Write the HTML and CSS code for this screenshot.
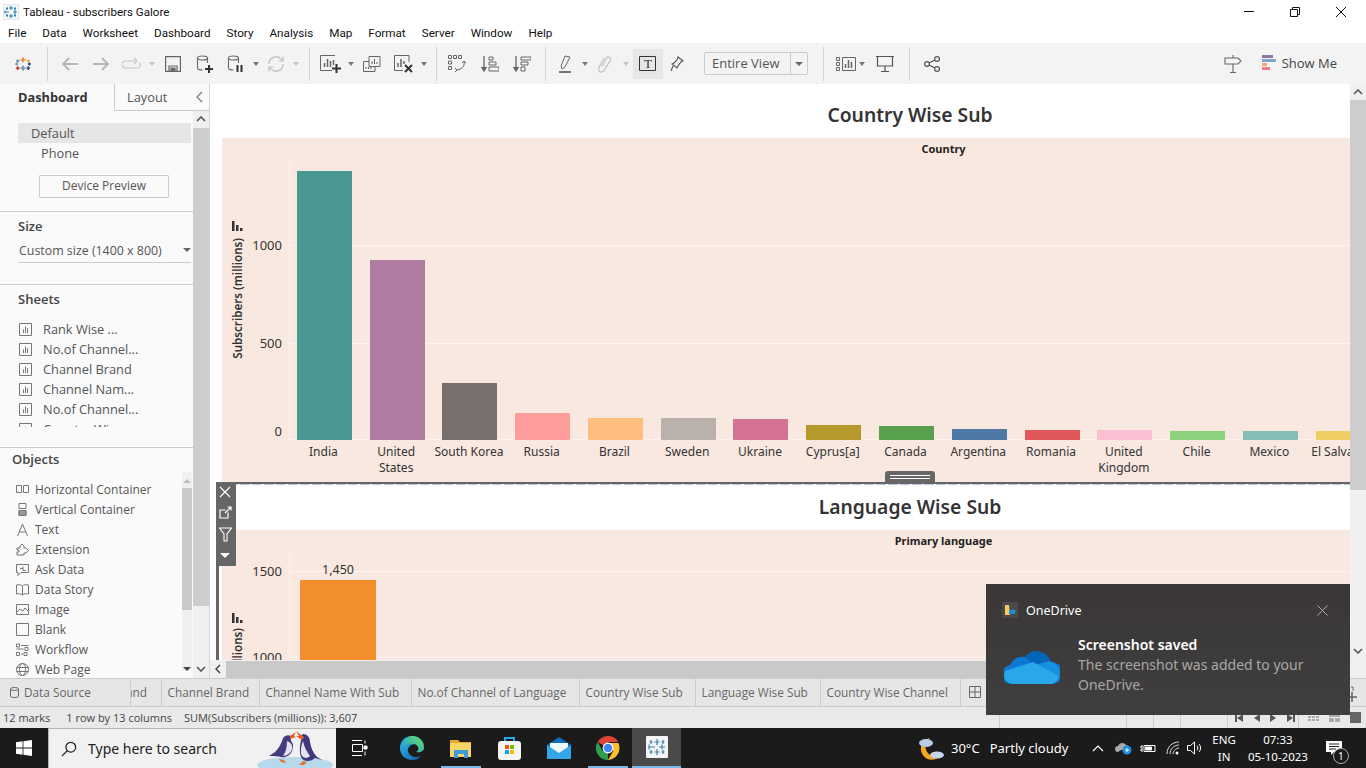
FILE: index.html
```html
<!DOCTYPE html>
<html lang="en">
<head>
    <meta charset="UTF-8">
    <title>Tableau - subscribers Galore</title>
    <link rel="stylesheet" href="styles.css">
</head>
<body>
<div class="app">
    <!-- window title -->
    <div class="titlebar">
        <svg class="title-icon" width="16" height="16" viewBox="0 0 16 16"><rect x="0.5" y="0.5" width="15" height="15" fill="#f4f8fb" stroke="#dfe6ec"/><path d="M8 2v4M6 4h4M8 10v4M6 12h4M2 8h4M2 6.5v3M10 8h4M12 6v4M4 3v3M3 4.500h2M12 3v3M11 4.500h2M4 10v3M3 11.500h2M12 10v3M11 11.500h2" stroke="#2f7fa8" stroke-width="1.100" fill="none"/></svg>
        <span class="title-text">Tableau - subscribers Galore</span>
        <div class="window-buttons">
            <svg width="12" height="12" viewBox="0 0 12 12"><path d="M1 5.500h10" stroke="#111"/></svg>
            <svg width="12" height="12" viewBox="0 0 12 12"><path d="M1.500 3.500h7v7h-7zM3.500 3.500v-2h7v7h-2" stroke="#111" fill="none"/></svg>
            <svg width="12" height="12" viewBox="0 0 12 12"><path d="M1 1l10 10M11 1L1 11" stroke="#111"/></svg>
        </div>
    </div>
    <div class="menubar">
        <span>File</span><span>Data</span><span>Worksheet</span><span>Dashboard</span><span>Story</span><span>Analysis</span><span>Map</span><span>Format</span><span>Server</span><span>Window</span><span>Help</span>
    </div>

    <!-- toolbar -->
    <div class="toolbar">
        <div class="tb-group tb-logo">
            <svg width="18" height="18" viewBox="0 0 24 24" fill="none" stroke-width="1.800"><path d="M12 3v7M8.500 6.500h7" stroke="#e8762b"/><path d="M5 6v4M3 8h4" stroke="#5b879b"/><path d="M19 6v4M17 8h4" stroke="#e8a33d"/><path d="M1.500 12h4M3.500 10v4" stroke="#7099a6"/><path d="M22.500 12h-4M20.500 10v4" stroke="#1f447a"/><path d="M12 14v7M8.500 17.500h7" stroke="#59879b"/><path d="M5 15v5M2.500 17.500h5" stroke="#c72037"/><path d="M19 15v5M16.500 17.500h5" stroke="#1f447a"/></svg>
        </div>
        <div class="sep"></div>
        <div class="tb-group tb-history">
            <svg width="18" height="16" viewBox="0 0 18 16" fill="none" stroke="#b5b5b5" stroke-width="1.800"><path d="M17 8H2M8 2L2 8l6 6"/></svg>
            <svg width="18" height="16" viewBox="0 0 18 16" fill="none" stroke="#b5b5b5" stroke-width="1.800"><path d="M1 8h15M10 2l6 6-6 6"/></svg>
            <svg width="20" height="14" viewBox="0 0 20 14" fill="none" stroke="#c4c4c4" stroke-width="1.200"><path d="M13 4H3.500a3 3 0 000 7h12a3 3 0 002-5M12 1l3 3-3 3"/></svg>
            <i class="dd dd-off"></i>
            <svg width="16" height="16" viewBox="0 0 16 16" fill="none" stroke="#666" stroke-width="1.200"><path d="M.600.600h14.800v14.800H.600z"/><path d="M4 15V10h8v5" /><path d="M6 15v-3h4v3" fill="#666"/></svg>
            <svg width="18" height="18" viewBox="0 0 18 18" fill="none" stroke="#666" stroke-width="1.100"><ellipse cx="6.500" cy="3" rx="5" ry="2"/><path d="M1.500 3v10c0 1 2 2 5 2M11.500 3v5"/><path d="M13 10v8M9 14h8" stroke="#333" stroke-width="2"/></svg>
            <svg width="18" height="18" viewBox="0 0 18 18" fill="none" stroke="#666" stroke-width="1.100"><ellipse cx="6.500" cy="3" rx="5" ry="2"/><path d="M1.500 3v10c0 1 2 2 5 2M11.500 3v5"/><path d="M10.500 10v7M14.500 10v7" stroke="#333" stroke-width="2"/></svg>
            <i class="dd"></i>
            <svg width="18" height="18" viewBox="0 0 18 18" fill="none" stroke="#c4c4c4" stroke-width="1.500"><path d="M2 9a7 7 0 0112-5l2 2M16 9a7 7 0 01-12 5l-2-2"/><path d="M16 1.500V6h-4.500M2 16.500V12h4.500" stroke-width="1.200"/></svg>
            <i class="dd dd-off"></i>
        </div>
        <div class="sep"></div>
        <div class="tb-group tb-sheets">
            <svg width="22" height="18" viewBox="0 0 22 18" fill="none" stroke="#666"><path d="M15 .500H.500v15H12"/><path d="M4.500 12V8M7.500 12V4M10.500 12V6M13.500 10V5" stroke-width="1.500"/><path d="M16.500 9v9M12 13.500h9" stroke="#333" stroke-width="2"/></svg>
            <i class="dd"></i>
            <svg width="18" height="16" viewBox="0 0 18 16" fill="none" stroke="#666"><path d="M6 .500h11v10H6z" fill="#f3f3f3"/><path d="M9 8V5M11.500 8V3M14 8V6"/><path d="M6 5.500H.500v10H12v-5"/><path d="M3 13v-2M5.500 13v-2M8 13v-2"/></svg>
            <svg width="20" height="18" viewBox="0 0 20 18" fill="none" stroke="#666"><path d="M15 7V.500H.500v15H9"/><path d="M4 12V8M7 12V4M10 9V6" stroke-width="1.500"/><path d="M11 10l7 7M18 10l-7 7" stroke="#333" stroke-width="2"/></svg>
            <i class="dd"></i>
        </div>
        <div class="sep"></div>
        <div class="tb-group tb-sort">
            <svg width="18" height="18" viewBox="0 0 18 18" fill="none" stroke="#666"><path d="M.500.500h3v3h-3zM5.500.500h3v3h-3zM10.500.500h3v3h-3zM.500 6h3v3h-3zM.500 11.500h3v3h-3z"/><path d="M16 6c1 4-1 8-7 9M7 13l2 2-2 2M14 8l2-2 2 2"/></svg>
            <svg width="18" height="16" viewBox="0 0 18 16" fill="none" stroke="#666"><path d="M3 0v14M.500 11L3 15l2.500-4" stroke-width="1.300" fill="#666"/><path d="M8 1h4v3H8zM8 6h7v3H8zM8 11h10v4H8z"/></svg>
            <svg width="18" height="16" viewBox="0 0 18 16" fill="none" stroke="#666"><path d="M3 0v14M.500 11L3 15l2.500-4" stroke-width="1.300" fill="#666"/><path d="M8 1h10v3H8zM8 6h7v3H8zM8 11h4v4H8z"/></svg>
        </div>
        <div class="sep"></div>
        <div class="tb-group tb-marks">
            <svg width="14" height="18" viewBox="0 0 14 18" fill="none" stroke="#666"><path d="M6 1l5 1-5 10-3 2 -1-3z"/><path d="M0 17h12" stroke="#555" stroke-width="1.600"/></svg>
            <i class="dd"></i>
            <svg width="14" height="18" viewBox="0 0 14 18" fill="none" stroke="#c4c4c4" stroke-width="1.400"><path d="M4 11.500L8.500 3a2.300 2.300 0 014 2.200L6 15.500a3 3 0 01-5.200-3L6.500 3"/></svg>
            <i class="dd dd-off"></i>
            <span></span>
            <div class="tb-active">
                <svg width="18" height="16" viewBox="0 0 18 16" fill="none" stroke="#333"><path d="M.500.500h16v14H.500z"/></svg>
                <span class="t-glyph">T</span>
            </div>
            <svg width="14" height="16" viewBox="0 0 14 16" fill="none" stroke="#555" stroke-width="1.100"><path d="M8 1l5 4-2 1-3 4-1 2-5-4 2-1 3-3zM3 10l-2 5"/></svg>
        </div>
        <div class="fit-select"><span class="fit-label">Entire View</span><span class="fit-arrow"><i class="dd dd-dark"></i></span></div>
        <div class="sep sep-fit"></div>
        <div class="tb-group tb-present">
            <svg width="20" height="14" viewBox="0 0 20 14" fill="none" stroke="#666"><path d="M.500.500h3v3h-3zM.500 5.500h3v3h-3zM.500 10.500h3v3h-3zM6.500.500h13v13h-13z"/><path d="M9.500 11V7M12.500 11V3M15.500 11V5" stroke-width="1.500"/></svg>
            <i class="dd"></i>
            <svg width="18" height="16" viewBox="0 0 18 16" fill="none" stroke="#555"><path d="M0 .500h18M1.500 1v9h15V1M9 10v5M5 15.500h8" stroke-width="1.200"/></svg>
        </div>
        <div class="sep"></div>
        <div class="tb-share">
            <svg width="16" height="16" viewBox="0 0 16 16" fill="none" stroke="#555" stroke-width="1.200"><circle cx="3" cy="8" r="2.400"/><circle cx="13" cy="3" r="2.400"/><circle cx="13" cy="13" r="2.400"/><path d="M5.200 7l5.600-3M5.200 9l5.600 3"/></svg>
        </div>
        <div class="tb-right">
            <svg width="18" height="18" viewBox="0 0 18 18" fill="none" stroke="#666" stroke-width="1.100"><path d="M9 0v3M1 3h13l3 3-3 3H1zM9 9v8M6 17.500h6"/></svg>
            <div class="show-me">
                <svg width="15" height="16" viewBox="0 0 15 16"><rect width="11" height="3" fill="#8d78a5"/><rect y="4" width="14" height="3" fill="#7fa6cf"/><rect y="8" width="5" height="3" fill="#f2a675"/><rect y="12" width="8" height="3" fill="#f47c86"/></svg>
                <span>Show Me</span>
            </div>
        </div>
    </div>

    <div class="main">
        <!-- left side panel -->
        <aside class="side">
            <div class="side-tabs">
                <div class="side-tab side-tab-active">Dashboard</div>
                <div class="side-tab side-tab-off">Layout<svg class="collapse" width="7" height="12" viewBox="0 0 7 12" fill="none" stroke="#777" stroke-width="1.200"><path d="M6 1L1 6l5 5"/></svg></div>
            </div>
            <div class="side-body">
                <div class="side-content">
                    <section class="device">
                        <div class="device-row device-on">Default</div>
                        <div class="device-row device-phone">Phone</div>
                        <div class="device-btn">Device Preview</div>
                    </section>
                    <section class="size">
                        <h4>Size</h4>
                        <div class="size-select"><span>Custom size (1400 x 800)</span><i class="dd dd-dark"></i></div>
                    </section>
                    <section class="sheets">
                        <h4>Sheets</h4>
                        <div class="sheet-list">
                            <div class="sheet-row"><svg width="13" height="13" viewBox="0 0 13 13"><use href="#sheet-ico"/></svg>Rank Wise ...</div>
                            <div class="sheet-row"><svg width="13" height="13" viewBox="0 0 13 13"><use href="#sheet-ico"/></svg>No.of Channel...</div>
                            <div class="sheet-row"><svg width="13" height="13" viewBox="0 0 13 13"><use href="#sheet-ico"/></svg>Channel Brand</div>
                            <div class="sheet-row"><svg width="13" height="13" viewBox="0 0 13 13"><use href="#sheet-ico"/></svg>Channel Nam...</div>
                            <div class="sheet-row"><svg width="13" height="13" viewBox="0 0 13 13"><use href="#sheet-ico"/></svg>No.of Channel...</div>
                            <div class="sheet-row"><svg width="13" height="13" viewBox="0 0 13 13"><use href="#sheet-ico"/></svg>Country Wise ...</div>
                        </div>
                    </section>
                    <section class="objects">
                        <h4>Objects</h4>
                        <div class="object-wrap">
                            <div class="object-list">
                                <div class="object-row"><svg width="13" height="13" viewBox="0 0 13 13" fill="none" stroke="#777"><path d="M.500 2.500h5v7h-5zM7.500 2.500h5v7h-5z"/></svg>Horizontal Container</div>
                                <div class="object-row"><svg width="13" height="13" viewBox="0 0 13 13" fill="none" stroke="#777"><path d="M3 .500h7v5H3zM3 7.500h7v5H3z"/><path d="M3 7.500h7v5H3z" fill="#999"/></svg>Vertical Container</div>
                                <div class="object-row"><svg width="13" height="13" viewBox="0 0 13 13" fill="none" stroke="#777"><path d="M1.500 13L6.500 1l5 12M3.500 9h6"/></svg>Text</div>
                                <div class="object-row"><svg width="13" height="13" viewBox="0 0 13 13" fill="none" stroke="#777"><path d="M1 5h3V3l2-2 2 2v2h2l2.500 2.500L10 10H8v2H1V9h2V7H1z"/></svg>Extension</div>
                                <div class="object-row"><svg width="13" height="13" viewBox="0 0 13 13" fill="none" stroke="#777"><path d="M.500 1.500h12v8H5l-3 3v-3H.500zM4 5.500h3M7 3.500v4h3"/></svg>Ask Data</div>
                                <div class="object-row"><svg width="13" height="13" viewBox="0 0 13 13" fill="none" stroke="#777"><path d="M6.500 3C5 1.500 2.500 1.500.500 2v9c2-.500 4.500-.500 6 1 1.500-1.500 4-1.500 6-1V2c-2-.500-4.500-.500-6 1zM6.500 3v9"/></svg>Data Story</div>
                                <div class="object-row"><svg width="13" height="13" viewBox="0 0 13 13" fill="none" stroke="#777"><path d="M.500 1.500h12v10H.500zM1 9l3-3 3 2 2-3 3 3"/></svg>Image</div>
                                <div class="object-row"><svg width="13" height="13" viewBox="0 0 13 13" fill="none" stroke="#777"><path d="M.500.500h12v12H.500z"/></svg>Blank</div>
                                <div class="object-row"><svg width="13" height="13" viewBox="0 0 13 13" fill="none" stroke="#777"><path d="M.500 1h3v3h-3zM5 2.500h7.500M.500 6h7M9 4.500h3v3H9zM.500 9.500h3v3h-3zM5 11h2M8 9.500h3v3H8z"/></svg>Workflow</div>
                                <div class="object-row"><svg width="13" height="13" viewBox="0 0 13 13" fill="none" stroke="#777"><circle cx="6.500" cy="6.500" r="6"/><ellipse cx="6.500" cy="6.500" rx="3" ry="6"/><path d="M.500 4.500h12M.500 8.500h12"/></svg>Web Page</div>
                            </div>
                            <div class="object-scroll">
                                <i class="tri-up"></i>
                                <div class="object-thumb"></div>
                                <i class="tri-down"></i>
                            </div>
                        </div>
                    </section>
                </div>
                <div class="side-scroll">
                    <svg class="scroll-chev" width="10" height="6" viewBox="0 0 10 6" fill="none" stroke="#555" stroke-width="1.600"><path d="M1 5l4-4 4 4"/></svg>
                    <div class="side-thumb"></div>
                    <svg class="scroll-chev scroll-chev-end" width="10" height="6" viewBox="0 0 10 6" fill="none" stroke="#555" stroke-width="1.600"><path d="M1 1l4 4 4-4"/></svg>
                </div>
            </div>
        </aside>

        <!-- dashboard canvas -->
        <div class="canvas">
            <div class="canvas-top">
                <div class="dash">
                    <div class="sheet">
                        <div class="sheet-title sheet-title-first">Country Wise Sub</div>
                        <div class="chart chart-country">
                            <div class="chart-head">Country</div>
                            <div class="axis">
                                <span class="axis-title">Subscribers (millions)</span>
                                <svg class="axis-sort" width="11" height="10" viewBox="0 0 11 10"><path d="M0 0h2.500v10H0zM4 4h2.500v6H4zM8 7h2.500v3H8z" fill="#333"/></svg>
                                <span class="tick" style="top:87px">1000</span>
                                <span class="tick" style="top:185px">500</span>
                                <span class="tick" style="top:273px">0</span>
                            </div>
                            <div class="plot plot-country">
                                <div class="bars">
                                    <div class="bar-col"><div class="bar c-teal" style="height:269px"></div></div>
                                    <div class="bar-col"><div class="bar c-purple" style="height:180px"></div></div>
                                    <div class="bar-col"><div class="bar c-brown" style="height:57px"></div></div>
                                    <div class="bar-col"><div class="bar c-salmon" style="height:27px"></div></div>
                                    <div class="bar-col"><div class="bar c-peach" style="height:22px"></div></div>
                                    <div class="bar-col"><div class="bar c-tan" style="height:22px"></div></div>
                                    <div class="bar-col"><div class="bar c-magenta" style="height:21px"></div></div>
                                    <div class="bar-col"><div class="bar c-olive" style="height:15px"></div></div>
                                    <div class="bar-col"><div class="bar c-green" style="height:14px"></div></div>
                                    <div class="bar-col"><div class="bar c-blue" style="height:11px"></div></div>
                                    <div class="bar-col"><div class="bar c-red" style="height:10px"></div></div>
                                    <div class="bar-col"><div class="bar c-pink" style="height:10px"></div></div>
                                    <div class="bar-col"><div class="bar c-lime" style="height:9px"></div></div>
                                    <div class="bar-col"><div class="bar c-sea" style="height:9px"></div></div>
                                    <div class="bar-col"><div class="bar c-yellow" style="height:9px"></div></div>
                                </div>
                            </div>
                            <div class="bar-labels">
                                <span>India</span><span>United States</span><span>South Korea</span><span>Russia</span><span>Brazil</span><span>Sweden</span><span>Ukraine</span><span>Cyprus[a]</span><span>Canada</span><span>Argentina</span><span>Romania</span><span>United Kingdom</span><span>Chile</span><span>Mexico</span><span class="nowrap">El Salvador</span>
                            </div>
                        </div>
                    </div>

                    <div class="sheet sheet-selected">
                        <div class="sheet-title">Language Wise Sub</div>
                        <div class="chart chart-language">
                            <div class="chart-head">Primary language</div>
                            <div class="axis">
                                <span class="axis-title axis-title-lang">Subscribers (millions)</span>
                                <svg class="axis-sort axis-sort-lang" width="11" height="10" viewBox="0 0 11 10"><path d="M0 0h2.500v10H0zM4 4h2.500v6H4zM8 7h2.500v3H8z" fill="#333"/></svg>
                                <span class="tick" style="top:21px">1500</span>
                                <span class="tick" style="top:107px">1000</span>
                            </div>
                            <div class="plot plot-language">
                                <div class="lang-bar">
                                    <span class="bar-value">1,450</span>
                                    <div class="bar c-orange"></div>
                                </div>
                            </div>
                        </div>
                    </div>
                </div>
                <div class="v-scroll">
                    <svg class="scroll-chev" width="10" height="6" viewBox="0 0 10 6" fill="none" stroke="#555" stroke-width="1.600"><path d="M1 5l4-4 4 4"/></svg>
                    <div class="v-thumb"></div>
                    <svg class="scroll-chev scroll-chev-end" width="10" height="6" viewBox="0 0 10 6" fill="none" stroke="#555" stroke-width="1.600"><path d="M1 1l4 4 4-4"/></svg>
                </div>

                <!-- selected zone controls -->
                <div class="sel-line-left"></div>
                <div class="sel-handle"><i></i><i></i></div>
                <div class="sel-tools">
                    <svg width="12" height="12" viewBox="0 0 12 12" fill="none" stroke="#fff" stroke-width="1.200"><path d="M1 1l10 10M11 1L1 11"/></svg>
                    <svg width="13" height="13" viewBox="0 0 13 13" fill="none" stroke="#fff" stroke-width="1.200"><path d="M9 6.500V12H1V4h5.500M6 7l6-6M8.500 1H12v3.500"/></svg>
                    <svg width="13" height="15" viewBox="0 0 13 15" fill="none" stroke="#fff" stroke-width="1.100"><path d="M.500 1h12L8 7v7H5V7z"/></svg>
                    <i class="dd dd-white"></i>
                </div>
            </div>
            <div class="h-scroll">
                <svg width="6" height="10" viewBox="0 0 6 10" fill="none" stroke="#444" stroke-width="1.500"><path d="M5 1L1 5l4 4"/></svg>
                <div class="h-thumb"></div>
            </div>
        </div>
    </div>

    <!-- sheet tabs -->
    <div class="tabs">
        <div class="tab tab-source"><svg width="9" height="11" viewBox="0 0 9 11" fill="none" stroke="#666"><ellipse cx="4.500" cy="2" rx="4" ry="1.500"/><path d="M.500 2v7c0 1 1.500 1.500 4 1.500S8.500 10 8.500 9V2"/></svg>Data Source</div>
        <div class="tab tab-clip"><span>Brand</span></div>
        <div class="tab tab-brand">Channel Brand</div>
        <div class="tab tab-name">Channel Name With Sub</div>
        <div class="tab tab-lang">No.of Channel of Language</div>
        <div class="tab tab-csub">Country Wise Sub</div>
        <div class="tab tab-lsub">Language Wise Sub</div>
        <div class="tab tab-cchan">Country Wise Channel</div>
        <div class="tab tab-new"><svg width="12" height="12" viewBox="0 0 12 12" fill="none" stroke="#666"><path d="M.500.500h11v11H.500zM6 .500v11M.500 6h11"/></svg></div>
        <svg class="tab-add" width="12" height="16" viewBox="0 0 12 16" fill="none" stroke="#666"><path d="M6 6v10M1 11h10" stroke-width="1.600"/><path d="M5 1h2v4" /></svg>
    </div>

    <!-- status bar -->
    <div class="statusbar">
        <div class="st-info">
            <span class="st-marks">12 marks</span>
            <span class="st-rows">1 row by 13 columns</span>
            <span class="st-sum">SUM(Subscribers (millions)): 3,607</span>
        </div>
        <div class="st-cell st-cell-a"></div>
        <div class="st-cell st-cell-b"></div>
        <div class="st-cell st-cell-b"></div>
        <div class="st-cell st-cell-c"></div>
        <div class="st-cell st-nav">
            <i class="st-arrow st-first"></i><i class="st-arrow st-prev"></i><i class="st-arrow st-next"></i><i class="st-arrow st-last"></i>
        </div>
        <div class="st-cell st-views">
            <svg width="11" height="9" viewBox="0 0 11 9"><path d="M0 0h3v2H0zM4 0h3v2H4zM8 0h3v2H8zM0 3h3v2H0zM4 3h3v2H4zM8 3h3v2H8zM0 6h3v2H0zM4 6h3v2H4zM8 6h3v2H8z" fill="#aaa"/></svg>
            <svg width="11" height="9" viewBox="0 0 11 9"><path d="M0 0h11v4H0zM0 5h5v4H0zM6 5h5v4H6z" fill="#aaa"/></svg>
            <span class="st-view-on"></span>
        </div>
    </div>

    <!-- windows taskbar -->
    <div class="taskbar">
        <div class="start">
            <svg width="16" height="16" viewBox="0 0 16 16"><path d="M0 2.200l6.600-.900v6.300H0zM7.400 1.200L16 0v7.600H7.400zM0 8.400h6.600v6.300L0 13.800zM7.400 8.400H16V16l-8.600-1.200z" fill="#fff"/></svg>
        </div>
        <div class="search">
            <svg width="16" height="16" viewBox="0 0 18 18" fill="none" stroke="#222" stroke-width="1.400"><circle cx="11" cy="7" r="5.500"/><path d="M7 11l-6 6"/></svg>
            <span>Type here to search</span>
            <svg class="penguins" width="78" height="40" viewBox="0 0 78 40">
                <ellipse cx="38" cy="37" rx="38" ry="8" fill="#b7d9ec"/>
                <path d="M34 8c-4-2-8 0-9 5-2 5-4 8-7 11l-6 4c5 0 9 0 12 1 4 1 9-1 11-6 2-5 1-8-1-10z" fill="#453c80"/>
                <path d="M30 13c4 2 6 4 5 8-1 4-5 7-9 7 3-4 4-9 4-15z" fill="#e4e4ee"/>
                <path d="M33 8l6-4-2 4 2 1-6 2z" fill="#e2612a"/>
                <path d="M22 31l5 1 2 3-5-1z" fill="#e2703a"/>
                <path d="M46 6c4 0 7 3 7 8 1 6 3 11 7 15l5 3-7-2c-4 4-12 4-14-1-2-6-1-12 0-17 0-3 0-5 2-6z" fill="#40387a"/>
                <path d="M46 13c-2 5-3 11-1 15 3 3 6 2 8 0-3-4-6-9-7-15z" fill="#e4e4ee"/>
                <path d="M47 9l-8-6 3 5-3 0 6 4z" fill="#e2612a"/>
                <path d="M46 33l4 1-3 3-5 0z" fill="#e2703a"/>
            </svg>
        </div>
        <div class="task-icons">
            <div class="task task-view"><svg width="16" height="16" viewBox="0 0 16 16" fill="none" stroke="#fff"><path d="M0 .500h10M0 15.500h10M.500 4.500h10v7H.500zM13 .500v3M13 11.500v4"/><path d="M12 6h3v3h-3z" fill="#fff"/></svg></div>
            <div class="task task-edge"><svg width="24" height="24" viewBox="0 0 24 24"><defs><linearGradient id="edgeA" x1="0" y1="0" x2="1" y2="1"><stop offset="0" stop-color="#35c1f1"/><stop offset="1" stop-color="#0c59a4"/></linearGradient><linearGradient id="edgeB" x1="0" y1="1" x2="1" y2="0"><stop offset="0" stop-color="#1b9de2"/><stop offset="1" stop-color="#6fe05f"/></linearGradient></defs><path d="M12 0C5 0 0 5.500 0 12c0 7 5.500 12 12 12 4 0 7-1.500 9-4-5 2.500-12 .500-13-5-.500-3 2-6 5-6.500 5-1 11 0 11 1.500C24 5 19 0 12 0z" fill="url(#edgeA)"/><path d="M12 0c7 0 12 5 12 12 0 3-4 5-8 4 2-1 3-3 2-5-1-3-5-4-8-3C5 9 3 12 3 12 3.500 5 7 0 12 0z" fill="url(#edgeB)"/></svg></div>
            <div class="task task-folder task-open"><svg width="22" height="20" viewBox="0 0 22 20"><path d="M0 2h8l2 2h11v14H0z" fill="#e6a82d"/><path d="M0 5h21v14H0z" fill="#f8d568"/><path d="M4 12h14v8h-4v-4H8v4H4z" fill="#3f9bd9"/></svg></div>
            <div class="task task-store"><svg width="23" height="24" viewBox="0 0 23 24"><path d="M7 6V2h9v4" fill="none" stroke="#28a8ea" stroke-width="2"/><rect y="5" width="23" height="19" rx="3" fill="#f5f5f5"/><rect x="7" y="9" width="4" height="4" fill="#f25022"/><rect x="12" y="9" width="4" height="4" fill="#7fba00"/><rect x="7" y="14" width="4" height="4" fill="#00a4ef"/><rect x="12" y="14" width="4" height="4" fill="#ffb900"/></svg></div>
            <div class="task task-mail"><svg width="24" height="22" viewBox="0 0 24 22"><path d="M0 8L12 0l12 8v14H0z" fill="#0f6cbd"/><path d="M3 6h18v9l-9 5-9-5z" fill="#eef7fd"/><path d="M0 8l12 8 12-8v14H0z" fill="#35a6e8"/></svg></div>
            <div class="task task-chrome task-open"><svg width="24" height="24" viewBox="0 0 24 24"><path d="M12 12L1.600 6A12 12 0 0122.400 6H12z" fill="#db4437"/><path d="M12 12l-5.200 3L1.600 6A12 12 0 0012 24z" fill="#2f9e4f"/><path d="M12 7h10.400A12 12 0 0112 24l5.200-9z" fill="#fbc02d"/><circle cx="12" cy="12" r="5.400" fill="#fff"/><circle cx="12" cy="12" r="4.300" fill="#4285f4"/></svg></div>
            <div class="task task-tableau"><svg width="22" height="22" viewBox="0 0 22 22" fill="none"><rect width="22" height="22" rx="1" fill="#f2f4f6"/><path d="M11 3v6M8.500 6h5M11 13v6M8.500 16h5M3 11h6M3 8.500v5M13 11h6M16 8.500v5M5 4v4M3.500 6h3M17 4v4M15.500 6h3M5 14v4M3.500 16h3M17 14v4M15.500 16h3" stroke="#3d85a8" stroke-width="1.200"/></svg></div>
        </div>
        <div class="tray">
            <svg class="weather" width="26" height="26" viewBox="0 0 26 26"><path d="M11 3a11 11 0 1011 17A10 10 0 0111 3z" fill="#f6a623"/><ellipse cx="7" cy="8" rx="7" ry="4" fill="#b9cde6"/><ellipse cx="18" cy="20" rx="7" ry="3.500" fill="#c5d6ea"/></svg>
            <span class="temp">30°C</span>
            <span class="cond">Partly cloudy</span>
            <svg class="tray-chev" width="12" height="7" viewBox="0 0 12 7" fill="none" stroke="#fff" stroke-width="1.200"><path d="M1 6l5-5 5 5"/></svg>
            <svg class="tray-ico tray-cloud" width="17" height="14" viewBox="0 0 17 14"><path d="M3 11a3 3 0 010-6 4.500 4.500 0 018-1 3.500 3.500 0 013 5H6z" fill="#aaa"/><circle cx="12" cy="9" r="4.500" fill="#1f8fe6"/><path d="M10 9h4M12 7v4" stroke="#fff"/></svg>
            <svg class="tray-ico tray-batt" width="16" height="12" viewBox="0 0 16 12" fill="none" stroke="#fff"><path d="M4 3.500h11v6H4zM0 5h2M0 8h2M2 3v7"/><path d="M5.500 5h6v3h-6z" fill="#fff"/></svg>
            <svg class="tray-ico tray-wifi" width="14" height="14" viewBox="0 0 14 14" fill="none" stroke="#ddd"><path d="M1 13C1 6 6 1 13 1M4 13c0-5 4-9 9-9M7 13c0-3 3-6 6-6"/><circle cx="11" cy="12" r="1.500" fill="#fff" stroke="none"/></svg>
            <svg class="tray-ico tray-vol" width="16" height="14" viewBox="0 0 16 14" fill="none" stroke="#fff"><path d="M.500 4.500h3L7.500 1v12l-4-3.500h-3zM10 4.500c1 1.500 1 3.500 0 5M12 3c2 2 2 6 0 8"/></svg>
            <div class="lang"><span>ENG</span><span>IN</span></div>
            <div class="clock"><span>07:33</span><span>05-10-2023</span></div>
            <div class="notify">
                <svg width="16" height="14" viewBox="0 0 16 14"><path d="M0 0h16v11H8l-3 3v-3H0z" fill="#fff"/><path d="M3 3h10M3 5.500h10M3 8h7" stroke="#222"/></svg>
                <span class="notify-count">1</span>
            </div>
        </div>
    </div>

    <!-- onedrive toast -->
    <div class="toast">
        <div class="toast-head">
            <span class="toast-app-icon"><svg width="12" height="12" viewBox="0 0 12 12"><path d="M1 1h4l1 10H1z" fill="#f4c95d"/><path d="M5 8a2 2 0 013-2 2 2 0 013 3v1H5z" fill="#1b8ad8"/></svg></span>
            <span class="toast-app">OneDrive</span>
            <svg class="toast-close" width="11" height="11" viewBox="0 0 11 11" fill="none" stroke="#a9a9a9"><path d="M.500.500l10 10M10.500.500l-10 10"/></svg>
        </div>
        <div class="toast-body">
            <svg class="toast-cloud" width="56" height="37" viewBox="0 0 56 37"><path d="M9 37A9.500 9.500 0 016 18 13 13 0 0121 10 15 15 0 0147 15a11 11 0 011 22z" fill="#0f78d4"/><path d="M21 10A15 15 0 0147 15a11 11 0 00-8 1L29 18z" fill="#0364b8"/><path d="M39 16a11 11 0 0116 13L30 18z" fill="#1490df"/><path d="M9 37a9 9 0 01-8-13L29 15l26 14a11 11 0 01-7 8z" fill="#28a8ea"/></svg>
            <div class="toast-text">
                <div class="toast-title">Screenshot saved</div>
                <div class="toast-msg">The screenshot was added to your OneDrive.</div>
            </div>
        </div>
    </div>
</div>

<svg class="defs" width="0" height="0">
    <symbol id="sheet-ico" viewBox="0 0 13 13"><path d="M.500.500h12v12H.500z" fill="none" stroke="#777"/><path d="M4.500 10V6.500M6.500 10V3.500M8.500 10V5" stroke="#777" fill="none"/></symbol>
</svg>
</body>
</html>
```

FILE: styles.css
```css
* {
    margin: 0;
    padding: 0;
    box-sizing: border-box;
}

body {
    width: 1366px;
    height: 768px;
    overflow: hidden;
    font-family: "Open Sans", "Noto Sans", sans-serif;
    font-size: 12px;
    color: #555;
    background: #fff;
}

.app {
    position: relative;
    display: flex;
    flex-direction: column;
    width: 1366px;
    height: 768px;
    overflow: hidden;
}

.defs {
    position: absolute;
}

/* title + menu */
.titlebar {
    display: flex;
    align-items: center;
    height: 22px;
    padding: 2px 0 0 3px;
    color: #111;
    font-family: Roboto, sans-serif;
    font-size: 11.600px;
}

.title-text {
    margin-left: 4px;
}

.window-buttons {
    display: flex;
    gap: 34px;
    margin-left: auto;
    margin-right: 19px;
}

.menubar {
    display: flex;
    gap: 16px;
    align-items: center;
    height: 21px;
    padding-left: 8px;
    color: #111;
    font-family: Roboto, sans-serif;
    font-size: 11.700px;
}

/* toolbar */
.toolbar {
    display: flex;
    align-items: center;
    height: 41px;
    background: #f3f3f3;
}

.tb-group {
    display: grid;
    align-items: center;
    justify-items: center;
    height: 41px;
}

.tb-logo {
    grid-template-columns: 30px;
    margin: 0 9px 0 8px;
}

.tb-history {
    grid-template-columns: 30px 32px 29px 12px 30px 34px 28px 12px 28px 12px;
    margin: 0 7px 0 7px;
}

.tb-sheets {
    grid-template-columns: 30px 10px 32px 32px 8px;
    margin: 0 8px 0 6px;
}

.tb-sort {
    grid-template-columns: 32px 34px 29px;
    margin: 0 9px 0 4px;
}

.tb-marks {
    grid-template-columns: 28px 10px 30px 11px 2px 30px 28px;
    margin-left: 6px;
}

.tb-present {
    grid-template-columns: 20px 12px 34px;
    margin: 0 7px 0 12px;
}

.tb-share {
    display: flex;
    margin-left: 14px;
}

.sep {
    width: 1px;
    height: 34px;
    background: #d4d4d4;
}

.sep-fit {
    margin-left: 15px;
}

.dd {
    display: block;
    width: 0;
    height: 0;
    border-left: 3.500px solid transparent;
    border-right: 3.500px solid transparent;
    border-top: 4px solid #777;
}

.dd-off {
    border-top-color: #c4c4c4;
}

.dd-dark {
    border-left-width: 4.500px;
    border-right-width: 4.500px;
    border-top: 4.500px solid #666;
}

.dd-white {
    border-left-width: 5px;
    border-right-width: 5px;
    border-top: 5px solid #fff;
}

.tb-active {
    position: relative;
    display: flex;
    align-items: center;
    justify-content: center;
    width: 30px;
    height: 30px;
    background: #e6e6e6;
}

.t-glyph {
    position: absolute;
    font-family: "Liberation Serif", serif;
    font-size: 13px;
    color: #333;
}

.fit-select {
    display: flex;
    width: 104px;
    height: 23px;
    margin-left: 13px;
    border: 1px solid #ccc;
    border-radius: 2px;
    font-size: 13px;
    line-height: 21px;
    color: #555;
}

.fit-label {
    width: 85px;
    padding-left: 7px;
    white-space: nowrap;
}

.fit-arrow {
    display: flex;
    flex: 1;
    align-items: center;
    justify-content: center;
    border-left: 1px solid #ccc;
}

.tb-right {
    display: flex;
    align-items: center;
    margin-left: auto;
    margin-right: 29px;
}

.show-me {
    display: flex;
    align-items: center;
    gap: 5px;
    margin-left: 20px;
    padding-bottom: 1px;
    font-size: 13px;
    line-height: 16px;
    color: #444;
}

/* main area */
.main {
    display: flex;
    height: 594px;
}

.side {
    display: flex;
    flex-direction: column;
    width: 210px;
    background: #fafafa;
    border-right: 1px solid #d4d4d4;
}

.side-tabs {
    display: flex;
    height: 27px;
}

.side-tab {
    display: flex;
    align-items: center;
    padding-bottom: 1px;
    font-size: 12.800px;
}

.side-tab-active {
    width: 114px;
    padding-left: 18px;
    padding-bottom: 2px;
    font-weight: 700;
    color: #333;
}

.side-tab-off {
    flex: 1;
    padding-left: 12px;
    border-left: 1px solid #ccc;
    border-bottom: 1px solid #ccc;
    color: #555;
}

.collapse {
    margin-left: auto;
    margin-right: 6px;
}

.side-body {
    display: flex;
    flex: 1;
    min-height: 0;
}

.side-content {
    width: 193px;
    overflow: hidden;
}

.side-content h4 {
    font-size: 13px;
    font-weight: 600;
    line-height: 18px;
    color: #444;
}

.device {
    height: 101px;
    padding: 12px 2px 0 18px;
    border-bottom: 1px solid #ccc;
}

.device-row {
    height: 20px;
    font-size: 12.800px;
    line-height: 20px;
}

.device-on {
    padding-left: 13px;
    background: #e6e6e6;
}

.device-phone {
    padding-left: 23px;
}

.device-btn {
    width: 130px;
    height: 23px;
    margin: 12px 0 0 21px;
    border: 1px solid #ccc;
    border-radius: 1px;
    background: #fafafa;
    font-size: 12px;
    line-height: 20px;
    text-align: center;
}

.size {
    height: 73px;
    padding: 5px 2px 0 18px;
    border-bottom: 1px solid #ccc;
}

.size-select {
    display: flex;
    align-items: center;
    justify-content: space-between;
    height: 25px;
    margin-top: 3px;
    padding: 0 0 0 1px;
    border-bottom: 1px solid #ccc;
    font-size: 12.400px;
}

.sheets {
    height: 163px;
    padding: 5px 2px 0 18px;
    border-bottom: 1px solid #ccc;
}

.sheet-list {
    height: 108px;
    margin-top: 11px;
    overflow: hidden;
}

.sheet-row {
    display: flex;
    align-items: center;
    gap: 11px;
    height: 20px;
    padding-left: 1px;
    font-size: 12.800px;
    white-space: nowrap;
}

.objects {
    padding: 2px 0 0 12px;
}

.object-wrap {
    display: flex;
    align-items: flex-start;
    height: 206px;
    margin-top: 4px;
}

.object-list {
    width: 170px;
    height: 206px;
    padding-top: 7px;
    overflow: hidden;
}

.object-row {
    display: flex;
    align-items: center;
    gap: 6px;
    height: 20px;
    padding-left: 4px;
    font-size: 12px;
    white-space: nowrap;
}

.object-scroll {
    display: flex;
    flex-direction: column;
    align-items: center;
    width: 10px;
    height: 199px;
    background: #f0f0f0;
}

.object-thumb {
    width: 10px;
    height: 122px;
    margin-top: 5px;
    background: #c9c9c9;
}

.tri-up,
.tri-down {
    display: block;
    width: 0;
    height: 0;
    border-left: 4px solid transparent;
    border-right: 4px solid transparent;
}

.tri-up {
    margin-top: 7px;
    border-bottom: 4px solid #bbb;
}

.tri-down {
    margin-top: auto;
    margin-bottom: 0;
    border-top: 4px solid #444;
}

.side-scroll {
    display: flex;
    flex-direction: column;
    align-items: center;
    width: 16px;
    background: #f0f0f0;
}

.scroll-chev {
    flex: none;
    margin-top: 5px;
}

.scroll-chev-end {
    margin-top: auto;
    margin-bottom: 6px;
}

.side-thumb {
    width: 16px;
    height: 478px;
    margin-top: 6px;
    background: #cdcdcd;
}

/* canvas */
.canvas {
    display: flex;
    flex: 1;
    flex-direction: column;
    min-width: 0;
}

.canvas-top {
    position: relative;
    display: flex;
    height: 576px;
}

.dash {
    width: 1140px;
    height: 576px;
    padding-left: 12px;
    overflow: hidden;
    background: #fff;
}

.sheet {
    width: 1376px;
}

.sheet-title {
    display: flex;
    align-items: center;
    justify-content: center;
    font-family: "Noto Sans", sans-serif;
    font-size: 19.300px;
    font-weight: 600;
    color: #333;
}

.sheet-title-first {
    height: 54px;
    padding-top: 7px;
}

.sheet-selected {
    position: relative;
    width: 1382px;
    margin-left: -6px;
    padding-left: 6px;
    border-top: 2px solid #666;
}

.sheet-selected .sheet-title {
    height: 46px;
    padding-bottom: 1px;
}

.sheet-selected::after {
    content: "";
    position: absolute;
    top: 0;
    left: 0;
    width: 1140px;
    height: 1px;
    background: repeating-linear-gradient(90deg, #b9c7dc 0 10px, transparent 10px 12px);
}

.chart {
    display: grid;
    grid-template-columns: 67px 1fr;
    background: #f9e8e0;
}

.chart-country {
    grid-template-rows: 20px 282px 42px;
}

.chart-language {
    grid-template-rows: 20px 110px;
}

.chart-head {
    grid-column: 2;
    font-family: "Noto Sans", sans-serif;
    font-size: 11px;
    font-weight: 700;
    line-height: 21px;
    color: #222;
    text-align: center;
}

.axis {
    position: relative;
    grid-column: 1;
    color: #333;
    font-family: "Noto Sans", sans-serif;
}

.tick {
    position: absolute;
    right: 7px;
    font-size: 13px;
    line-height: 16px;
    transform: translateY(-8px);
}

.axis-title {
    position: absolute;
    left: 9px;
    bottom: 81px;
    font-size: 11.600px;
    font-weight: 600;
    line-height: 14px;
    white-space: nowrap;
    writing-mode: vertical-rl;
    transform: rotate(180deg);
}

.axis-title-lang {
    bottom: auto;
    top: 78px;
}

.axis-sort {
    position: absolute;
    left: 10px;
    top: 63px;
}

.axis-sort-lang {
    top: 63px;
}

.plot {
    border-left: 1px solid #fdf3ee;
    background-repeat: no-repeat;
    background-image: linear-gradient(#fdf3ee, #fdf3ee), linear-gradient(#fdf3ee, #fdf3ee);
    background-size: 100% 1px;
}

.plot-country {
    background-position: 0 87px, 0 185px;
    border-bottom: 1px solid #fdf3ee;
}

.plot-language {
    background-position: 0 21px, 0 107px;
    overflow: hidden;
}

.bars {
    display: grid;
    grid-template-columns: repeat(15, 72.770px);
    height: 282px;
    margin-left: -2px;
}

.bar-col {
    display: flex;
    align-items: flex-end;
    justify-content: center;
}

.bar {
    width: 55px;
}

.c-teal { background: #499894; }
.c-purple { background: #b07aa1; }
.c-brown { background: #79706e; }
.c-salmon { background: #ff9d9a; }
.c-peach { background: #ffbe7d; }
.c-tan { background: #bab0ac; }
.c-magenta { background: #d37295; }
.c-olive { background: #b6992d; }
.c-green { background: #59a14f; }
.c-blue { background: #4e79a7; }
.c-red { background: #e15759; }
.c-pink { background: #fabfd2; }
.c-lime { background: #8cd17d; }
.c-sea { background: #86bcb6; }
.c-yellow { background: #f1ce63; }
.c-orange { background: #f28e2b; }

.bar-labels {
    display: grid;
    grid-column: 2;
    grid-template-columns: repeat(15, 72.770px);
    margin-left: -2px;
    padding-top: 4px;
    font-family: "Noto Sans", sans-serif;
    font-size: 12px;
    line-height: 16px;
    color: #333;
    text-align: center;
}

.nowrap {
    white-space: nowrap;
}

.lang-bar {
    display: flex;
    flex-direction: column;
    align-items: center;
    width: 76px;
    margin-left: 10px;
    padding-top: 11px;
}

.lang-bar .bar {
    width: 76px;
    height: 100px;
    margin-top: 2px;
}

.bar-value {
    font-family: "Noto Sans", sans-serif;
    font-size: 12.500px;
    line-height: 17px;
    color: #333;
}

/* selected zone */
.sel-line-left {
    position: absolute;
    top: 398px;
    left: 6px;
    bottom: 0;
    width: 3px;
    background: #666;
}

.sel-handle {
    position: absolute;
    top: 387px;
    left: 675px;
    display: flex;
    flex-direction: column;
    gap: 2px;
    align-items: center;
    justify-content: center;
    width: 50px;
    height: 12px;
    background: #666;
    border-radius: 3px 3px 0 0;
}

.sel-handle i {
    display: block;
    width: 40px;
    height: 1px;
    background: #fff;
}

.sel-tools {
    position: absolute;
    top: 400px;
    left: 6px;
    display: flex;
    flex-direction: column;
    align-items: center;
    gap: 8px;
    width: 20px;
    height: 82px;
    padding: 2px 2px 0 0;
    background: #666;
    border-radius: 0 0 1px 1px;
}

.sel-tools .dd {
    margin-top: 3px;
}

.v-scroll {
    display: flex;
    flex-direction: column;
    align-items: center;
    width: 16px;
    background: #f0f0f0;
}

.v-thumb {
    width: 16px;
    height: 390px;
    margin-top: 5px;
    background: #cdcdcd;
}

.h-scroll {
    display: flex;
    align-items: center;
    height: 18px;
    padding-left: 5px;
    background: #f0f0f0;
}

.h-thumb {
    width: 1124px;
    height: 17px;
    margin-left: 5px;
    background: #c9c9c9;
}

/* tabs */
.tabs {
    position: relative;
    display: flex;
    height: 29px;
    background: #e6e6e6;
    border-top: 1px solid #ccc;
    border-bottom: 1px solid #ccc;
}

.tab {
    display: flex;
    align-items: center;
    padding-left: 5.500px;
    padding-bottom: 1px;
    border-right: 1px solid #ccc;
    font-size: 11.800px;
    color: #666;
    white-space: nowrap;
    overflow: hidden;
}

.tab-source {
    gap: 5px;
    width: 131px;
    padding-left: 10px;
}

.tab-clip {
    justify-content: flex-end;
    width: 31px;
    padding: 0 14px 1px 0;
}

.tab-brand { width: 98px; }
.tab-name { width: 152px; }
.tab-lang { width: 168px; }
.tab-csub { width: 116px; }
.tab-lsub { width: 125px; }
.tab-cchan { width: 140px; }
.tab-new { padding-left: 8px; border-right: 0; }

.tab-add {
    margin: 7px 8px 0 auto;
}

/* status bar */
.statusbar {
    display: flex;
    height: 21px;
    background: #e9e9e9;
    font-size: 11px;
    color: #444;
}

.st-info {
    display: flex;
    flex: 1;
    align-items: center;
    white-space: nowrap;
}

.st-marks { margin-left: 3px; }
.st-rows { margin-left: 16px; }
.st-sum { margin-left: 12px; }

.st-cell {
    display: flex;
    align-items: center;
    border-left: 1px solid #ccc;
}

.st-cell-a { width: 127px; }
.st-cell-b { width: 27px; }
.st-cell-c { width: 47px; }

.st-nav {
    gap: 10.500px;
    width: 71px;
    padding-left: 9px;
}

.st-arrow {
    display: block;
    width: 0;
    height: 0;
    border-top: 4px solid transparent;
    border-bottom: 4px solid transparent;
}

.st-first,
.st-prev {
    border-right: 6px solid #555;
}

.st-next,
.st-last {
    border-left: 6px solid #555;
}

.st-first {
    box-shadow: -2px 0 0 #555;
}

.st-last {
    box-shadow: 2px 0 0 #555;
}

.st-views {
    gap: 10px;
    width: 68px;
    padding-left: 9px;
}

.st-view-on {
    display: block;
    width: 11px;
    height: 11px;
    background: #666;
}

/* taskbar */
.taskbar {
    display: flex;
    height: 40px;
    background: #1b1b1b;
    color: #fff;
    font-family: "Noto Sans", sans-serif;
}

.start {
    display: flex;
    align-items: center;
    justify-content: center;
    width: 48px;
}

.search {
    position: relative;
    display: flex;
    align-items: center;
    gap: 11px;
    width: 288px;
    padding-left: 12px;
    background: #f1f1f1;
    border: 1px solid #b5b5b5;
    border-width: 1px 0 0 1px;
    font-size: 14px;
    color: #222;
}

.penguins {
    position: absolute;
    right: 1px;
    bottom: 0;
}

.task-icons {
    display: flex;
    margin-left: 8px;
}

.task {
    display: flex;
    align-items: center;
    justify-content: center;
    width: 49px;
    height: 40px;
}

.task-view {
    width: 32px;
}

.task-edge {
    margin-left: 11px;
}

.task-open {
    background: linear-gradient(#76b9ed, #76b9ed) center bottom / 40px 2px no-repeat;
}

.task-tableau {
    background: #4a4a4a;
    border-bottom: 2px solid #76b9ed;
}

.tray {
    display: flex;
    flex: 1;
    align-items: center;
    margin-left: 238px;
    font-size: 13px;
    white-space: nowrap;
}

.temp {
    margin-left: 6px;
}

.cond {
    margin-left: 10px;
}

.tray-chev {
    margin-left: 24px;
}

.tray-ico {
    margin-left: 7px;
}

.tray-cloud {
    margin-left: 11px;
}

.tray-batt {
    margin-left: 8px;
}

.tray-wifi {
    margin-left: 10px;
}

.lang,
.clock {
    display: flex;
    flex-direction: column;
    align-items: center;
    font-size: 11.500px;
    line-height: 17px;
}

.lang {
    margin-left: 9px;
}

.clock {
    margin-left: 12px;
}

.notify {
    position: relative;
    display: flex;
    margin-left: 18px;
}

.notify-count {
    position: absolute;
    left: 7px;
    top: 7px;
    width: 16px;
    height: 16px;
    border: 1px solid #aaa;
    border-radius: 50%;
    background: #1b1b1b;
    font-size: 10px;
    line-height: 14px;
    text-align: center;
}

/* toast */
.toast {
    position: absolute;
    left: 986px;
    top: 584px;
    width: 364px;
    height: 131px;
    padding: 16px;
    background: linear-gradient(#3a3736, #3f3e3e);
    color: #fff;
    font-family: "Noto Sans", sans-serif;
}

.toast-head {
    display: flex;
    align-items: center;
    height: 20px;
}

.toast-app-icon {
    display: flex;
    align-items: center;
    justify-content: center;
    width: 16px;
    height: 16px;
    background: #4b4948;
}

.toast-app {
    margin-left: 8px;
    font-size: 12.500px;
}

.toast-close {
    margin-left: auto;
    margin-right: 6px;
}

.toast-body {
    display: flex;
    margin-top: 15px;
}

.toast-cloud {
    flex: none;
    margin: 12px 18px 0 2px;
}

.toast-title {
    font-size: 14px;
    font-weight: 600;
    line-height: 20px;
}

.toast-msg {
    width: 250px;
    font-size: 14px;
    line-height: 20px;
    color: #a8a8a8;
}
```
